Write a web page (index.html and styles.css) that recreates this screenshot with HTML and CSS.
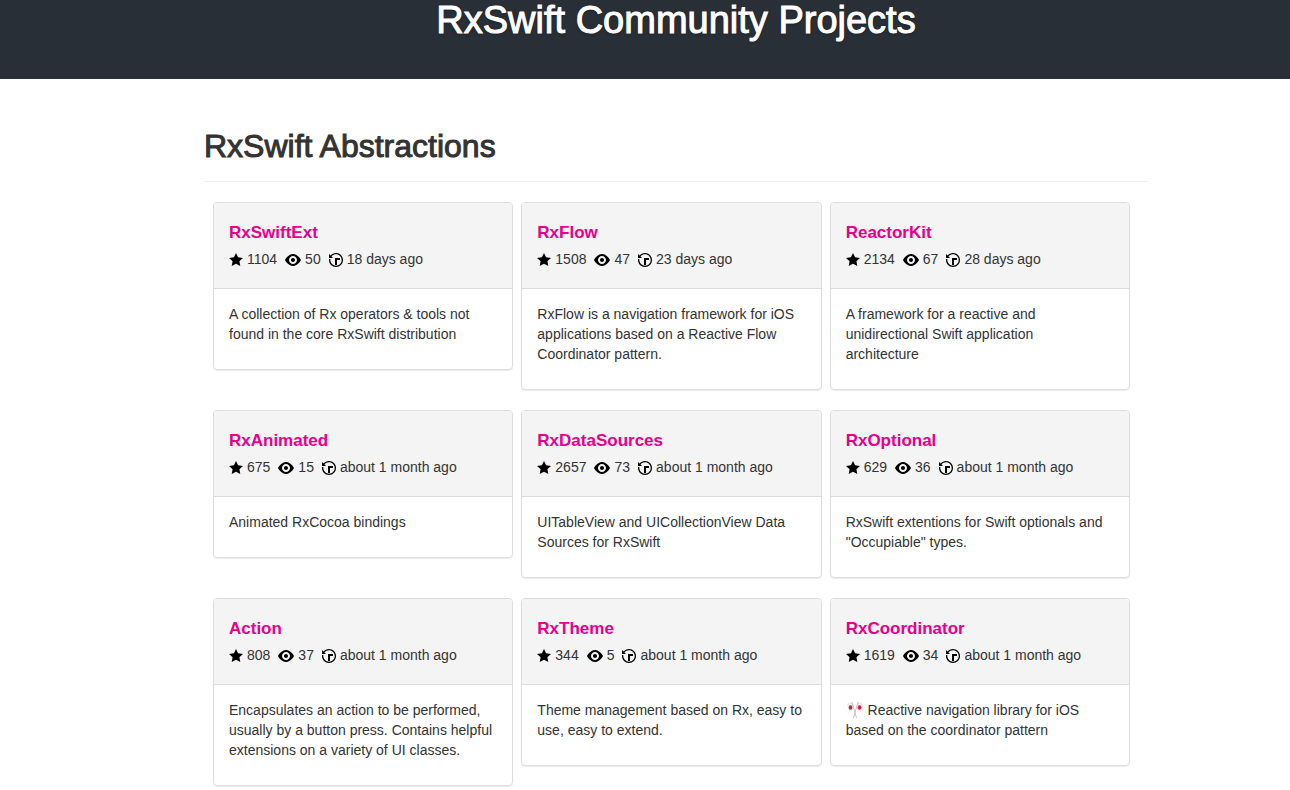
FILE: index.html
```
<!DOCTYPE html>
<html lang="en">
<head>
<meta charset="utf-8">
<title>RxSwift Community Projects</title>
<link rel="stylesheet" href="styles.css">
</head>
<body>
<svg class="sprite" aria-hidden="true">
  <symbol id="star" viewBox="0 0 14 16"><path d="M14 6l-4.9-.64L7 1 4.9 5.36 0 6l3.6 3.26L2.67 14 7 11.67 11.33 14l-.93-4.74L14 6z"/></symbol>
  <symbol id="eye" viewBox="0 0 16 16"><path d="M8.06 2C3 2 0 8 0 8s3 6 8.06 6C13 14 16 8 16 8s-3-6-7.94-6zM8 12c-2.2 0-4-1.78-4-4 0-2.2 1.8-4 4-4 2.22 0 4 1.8 4 4 0 2.22-1.78 4-4 4zm2-4c0 1.11-.89 2-2 2-1.11 0-2-.89-2-2 0-1.11.89-2 2-2 1.11 0 2 .89 2 2z"/></symbol>
  <symbol id="history" viewBox="0 0 14 16"><path d="M8 13H6V6h5v2H8v5zM7 1C4.81 1 2.87 2.02 1.59 3.59L0 2v4h4L2.5 4.5C3.55 3.17 5.17 2.3 7 2.3c3.14 0 5.7 2.56 5.7 5.7s-2.56 5.7-5.7 5.7A5.71 5.71 0 0 1 1.3 8c0-.34.03-.67.09-1H.08C.03 7.33 0 7.66 0 8c0 3.86 3.14 7 7 7s7-3.14 7-7-3.14-7-7-7z"/></symbol>
</svg>
<header class="banner"><h1>RxSwift Community Projects</h1></header>
<main class="page">
<section class="content">
  <h2 class="section-title">RxSwift Abstractions</h2>
  <div class="cards">
    <article class="card">
      <div class="card-head"><h3><a href="#">RxSwiftExt</a></h3>
        <p class="stats"><span><svg class="icon"><use href="#star"/></svg>1104</span><span><svg class="icon wide"><use href="#eye"/></svg>50</span><span><svg class="icon"><use href="#history"/></svg>18 days ago</span></p></div>
      <p class="card-body">A collection of Rx operators &amp; tools not found in the core RxSwift distribution</p>
    </article>
    <article class="card">
      <div class="card-head"><h3><a href="#">RxFlow</a></h3>
        <p class="stats"><span><svg class="icon"><use href="#star"/></svg>1508</span><span><svg class="icon wide"><use href="#eye"/></svg>47</span><span><svg class="icon"><use href="#history"/></svg>23 days ago</span></p></div>
      <p class="card-body">RxFlow is a navigation framework for iOS applications based on a Reactive Flow Coordinator pattern.</p>
    </article>
    <article class="card">
      <div class="card-head"><h3><a href="#">ReactorKit</a></h3>
        <p class="stats"><span><svg class="icon"><use href="#star"/></svg>2134</span><span><svg class="icon wide"><use href="#eye"/></svg>67</span><span><svg class="icon"><use href="#history"/></svg>28 days ago</span></p></div>
      <p class="card-body">A framework for a reactive and unidirectional Swift application<br>architecture</p>
    </article>
    <article class="card">
      <div class="card-head"><h3><a href="#">RxAnimated</a></h3>
        <p class="stats"><span><svg class="icon"><use href="#star"/></svg>675</span><span><svg class="icon wide"><use href="#eye"/></svg>15</span><span><svg class="icon"><use href="#history"/></svg>about 1 month ago</span></p></div>
      <p class="card-body">Animated RxCocoa bindings</p>
    </article>
    <article class="card">
      <div class="card-head"><h3><a href="#">RxDataSources</a></h3>
        <p class="stats"><span><svg class="icon"><use href="#star"/></svg>2657</span><span><svg class="icon wide"><use href="#eye"/></svg>73</span><span><svg class="icon"><use href="#history"/></svg>about 1 month ago</span></p></div>
      <p class="card-body">UITableView and UICollectionView Data Sources for RxSwift</p>
    </article>
    <article class="card">
      <div class="card-head"><h3><a href="#">RxOptional</a></h3>
        <p class="stats"><span><svg class="icon"><use href="#star"/></svg>629</span><span><svg class="icon wide"><use href="#eye"/></svg>36</span><span><svg class="icon"><use href="#history"/></svg>about 1 month ago</span></p></div>
      <p class="card-body">RxSwift extentions for Swift optionals and "Occupiable" types.</p>
    </article>
    <article class="card">
      <div class="card-head"><h3><a href="#">Action</a></h3>
        <p class="stats"><span><svg class="icon"><use href="#star"/></svg>808</span><span><svg class="icon wide"><use href="#eye"/></svg>37</span><span><svg class="icon"><use href="#history"/></svg>about 1 month ago</span></p></div>
      <p class="card-body">Encapsulates an action to be performed, usually by a button press. Contains helpful extensions on a variety of UI classes.</p>
    </article>
    <article class="card">
      <div class="card-head"><h3><a href="#">RxTheme</a></h3>
        <p class="stats"><span><svg class="icon"><use href="#star"/></svg>344</span><span><svg class="icon wide"><use href="#eye"/></svg>5</span><span><svg class="icon"><use href="#history"/></svg>about 1 month ago</span></p></div>
      <p class="card-body">Theme management based on Rx, easy to use, easy to extend.</p>
    </article>
    <article class="card">
      <div class="card-head"><h3><a href="#">RxCoordinator</a></h3>
        <p class="stats"><span><svg class="icon"><use href="#star"/></svg>1619</span><span><svg class="icon wide"><use href="#eye"/></svg>34</span><span><svg class="icon"><use href="#history"/></svg>about 1 month ago</span></p></div>
      <p class="card-body"><svg class="flags" viewBox="0 0 18 18" role="img" aria-label="Crossed flags"><path d="M1.500 3l4-1.500 2 6-4 3zM16.500 3l-4-1.500-2 6 4 3z" fill="#eeeef1" stroke="#dadade" stroke-width=".5"/><path d="M6 1l4.500 16M12 1L7.500 17" fill="none" stroke="#b9b9bd" stroke-width=".8"/><ellipse cx="4.500" cy="6.500" rx="1.800" ry="2.200" fill="#d92231"/><ellipse cx="13.500" cy="6.500" rx="1.800" ry="2.200" fill="#d92231"/></svg> Reactive navigation library for iOS based on the coordinator pattern</p>
    </article>
  </div>
</section>
</main>
</body>
</html>
```
FILE: styles.css
```
* { box-sizing: border-box; }
body {
  margin: 0;
  background: #fff;
  color: #333;
  font: 14px/20px "Helvetica Neue", Helvetica, "Liberation Sans", Arial, sans-serif;
}
h1, h2, h3, p { margin: 0; }
.sprite { display: none; }
.banner {
  padding: 0 0 39px 62px;
  background: #282f36;
  color: #fff;
  text-align: center;
}
.banner h1 {
  font-size: 38px;
  font-weight: 400;
  line-height: 40px;
  -webkit-text-stroke: 1px #fff;
  text-shadow: 0 1px 3px rgba(0, 0, 0, .4);
}
.page { padding: 47px 0 20px 62px; }
.content {
  max-width: 944px;
  margin: 0 auto;
}
.section-title {
  padding-bottom: 15px;
  border-bottom: 1px solid #eee;
  font-size: 32px;
  font-weight: 400;
  line-height: 40px;
  -webkit-text-stroke: 1px #333;
}
.cards {
  display: grid;
  grid-template-columns: repeat(3, 1fr);
  gap: 20px 8px;
  align-items: start;
  padding: 20px 18px 0 9px;
}
.card {
  border: 1px solid #ddd;
  border-radius: 4px;
  box-shadow: 0 1px 1px rgba(0, 0, 0, .08);
  overflow: hidden;
}
.card-head {
  padding: 20px 15px 19px;
  border-bottom: 1px solid #ddd;
  background: #f4f4f4;
}
.card h3 { font-size: 17px; line-height: 20px; }
.card a { color: #e6008c; text-decoration: none; }
.stats {
  display: flex;
  gap: 8px;
  padding-top: 6px;
}
.stats span {
  display: flex;
  align-items: center;
  gap: 4px;
}
.icon { width: 14px; height: 16px; margin-top: 1px; fill: #000; }
.icon.wide { width: 16px; }
.card-body { padding: 15px 15px 25px; }
.flags { width: 18px; height: 18px; vertical-align: -2px; margin-block: -2px; }
```
